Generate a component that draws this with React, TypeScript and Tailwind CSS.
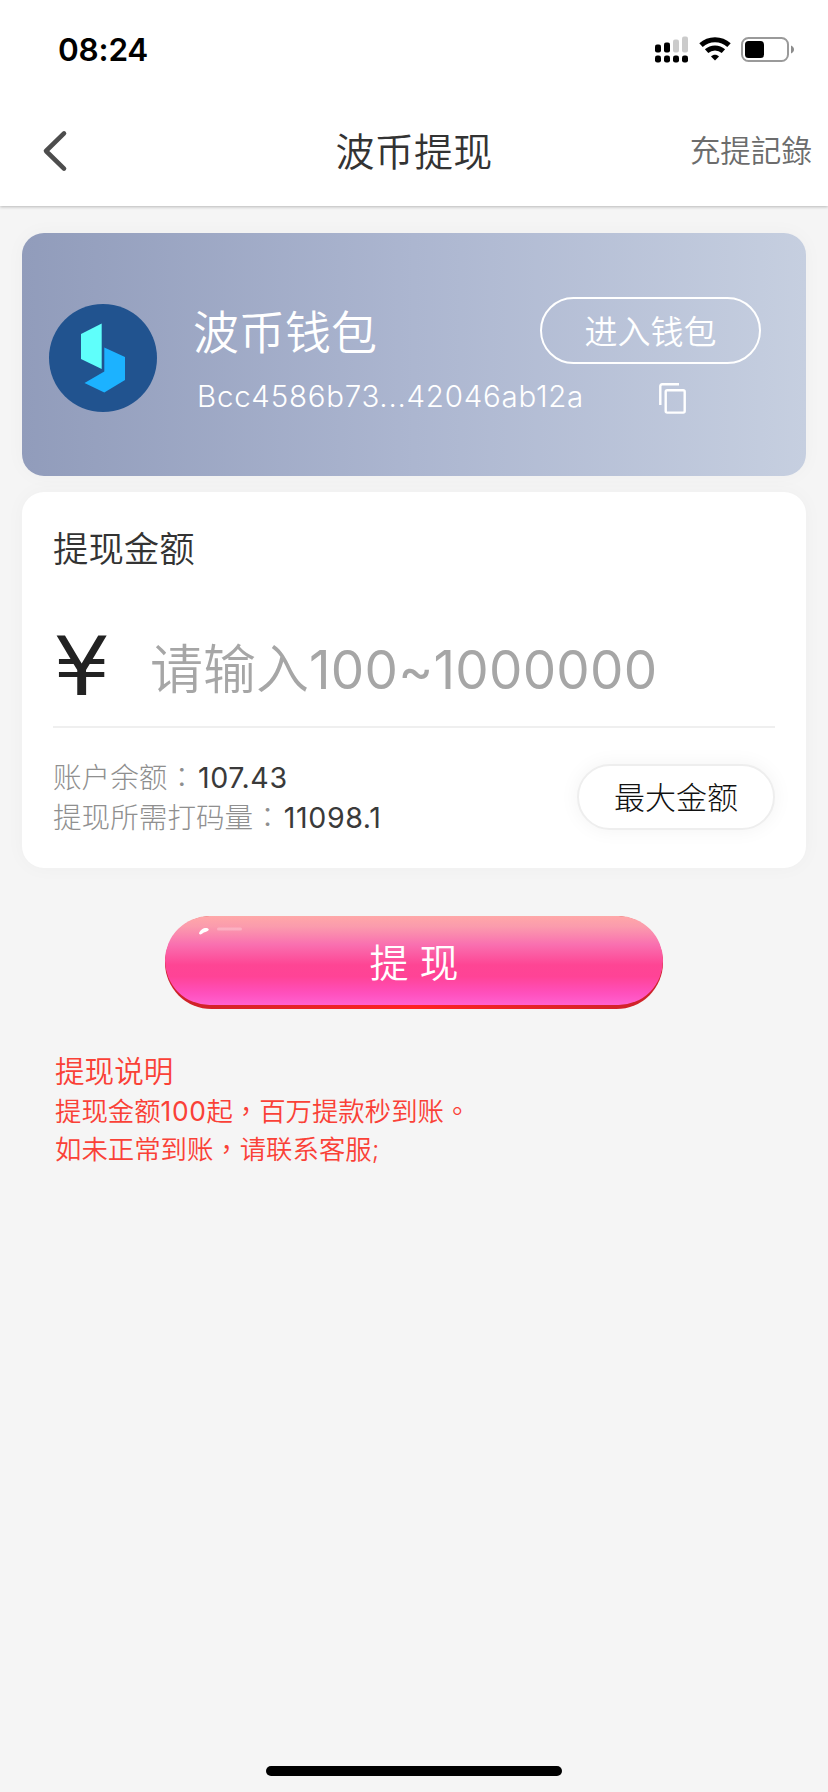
const sans = "font-['Inter','Noto_Sans_CJK_SC',sans-serif]";
const sansTc = "font-['Noto_Sans_CJK_TC',sans-serif]";

const balances = [
  { label: "账户余额", value: "107.43" },
  { label: "提现所需打码量", value: "11098.1" },
];

function StatusBar() {
  return (
    <div className="flex h-24 items-center justify-between pl-[58px] pr-[34px] pt-[3px] text-black">
      <span className="text-[31.5px] font-semibold leading-none tracking-[-0.2px]">08:24</span>
      <div className="flex items-center gap-[11px]">
        <svg className="h-[27px] w-[33px]" viewBox="0 0 33 27">
          <rect x="0" y="8.5" width="6" height="8" rx="2" />
          <rect x="9" y="6.5" width="6" height="10" rx="2" />
          <rect x="18" y="3.5" width="6" height="13" rx="2" fill="#cbcbcb" />
          <rect x="27" y="0.5" width="6" height="16" rx="2" fill="#cbcbcb" />
          {[0, 9, 18, 27].map((x) => (
            <rect key={x} x={x} y="19.5" width="6" height="7" rx="2.2" />
          ))}
        </svg>
        <svg className="mb-[1px] h-6 w-8" viewBox="0 0 32 24" fill="none" stroke="#000">
          <path d="M2 8.2C9.8 0.9 22.2 0.9 30 8.2" strokeWidth="5" />
          <path d="M7.6 14.2C12.3 9.9 19.7 9.9 24.4 14.2" strokeWidth="5" />
          <path d="M12 19.4C14.2 17.3 17.8 17.3 20 19.4L16 23.6Z" fill="#000" stroke="none" />
        </svg>
        <svg className="-ml-[1px] h-[25px] w-[53px]" viewBox="0 0 53 25">
          <rect x="1" y="1" width="46" height="23" rx="6.5" fill="none" stroke="#9a9a9a" strokeWidth="2" />
          <rect x="4" y="4" width="19" height="17" rx="3.5" />
          <path d="M50 8.5C54 10 54 15 50 16.5Z" fill="#8c8c8c" />
        </svg>
      </div>
    </div>
  );
}

function NavBar() {
  return (
    <div className="grid h-[110px] grid-cols-[1fr_auto_1fr] items-center px-4">
      <svg className="ml-[26px] h-[42px] w-[26px]" viewBox="0 0 26 42" fill="none" stroke="#4d4d4d" strokeWidth="4.6" strokeLinecap="round" strokeLinejoin="round">
        <path d="M22 3.4L4 21L22 38.6" />
      </svg>
      <h1 className="text-[39px] font-[350] leading-none tracking-[0.2px] text-[#333]">波币提现</h1>
      <span className={`${sansTc} mb-1 justify-self-end text-[30.6px] font-[350] leading-none text-[#6c6c6c]`}>充提記錄</span>
    </div>
  );
}

function WalletLogo() {
  return (
    <svg className="h-[108px] w-[108px] shrink-0" viewBox="0 0 108 108">
      <circle cx="54" cy="54" r="54" fill="#21538f" />
      <path d="M32 30L52.7 19.5V65L32 55Z" fill="#5ffffb" />
      <path d="M55.3 43.5L76 53V76L55.3 88.5L35.5 79L55.3 67.5Z" fill="#1cb2ff" />
    </svg>
  );
}

function WalletCard() {
  return (
    <section className="flex h-[243px] rounded-[22px] bg-linear-to-r from-[#919cbb] via-[#acb6d0] to-[#c6cfe0] pl-[27px] text-white shadow-[0_0_20px_rgba(0,0,0,0.03)]">
      <div className="pt-[71px]">
        <WalletLogo />
      </div>
      <div className="flex-1 pl-9 pr-[45px] pt-16">
        <div className="flex h-[67px] justify-between">
          <h2 className="pt-[2px] text-[46px] font-[350] leading-[67px]">波币钱包</h2>
          <button className="h-[67px] w-[221px] rounded-full border-2 border-white pt-[3px] text-[33px] font-[350] leading-none">进入钱包</button>
        </div>
        <div className="mt-3.5 flex h-10 items-center pl-1">
          <span className="w-[462px] pb-1 text-[29.5px] font-light leading-9 tracking-[0.74px]">Bcc4586b73...42046ab12a</span>
          <svg className="h-[31px] w-[27px]" viewBox="0 0 27 31" fill="none" stroke="#fff" strokeWidth="2.4">
            <path d="M1.3 22V3.3Q1.3 1.3 3.3 1.3H20" />
            <rect x="6.7" y="7.2" width="19" height="22.4" rx="1.5" />
          </svg>
        </div>
      </div>
    </section>
  );
}

function AmountCard() {
  return (
    <section className="mt-4 h-[376px] rounded-[22px] bg-white px-[31px] pt-[37px] shadow-[0_0_20px_rgba(0,0,0,0.03)]">
      <h3 className="h-[42px] text-[35.4px] font-[350] leading-[42px] text-[#333]">提现金额</h3>
      <div className="mt-[43px] flex h-[114px] items-start border-b-2 border-[#efefef]">
        <span className="w-[97px] origin-left scale-x-110 pt-2 font-['DejaVu_Sans',sans-serif] text-[82px] leading-[90px] text-[#222]">¥</span>
        <span className="pt-4 text-[53px] font-[350] leading-[80px] text-[#a6a6a6]">
          请输入<span className="font-normal tracking-[0.25px]">100~1000000</span>
        </span>
      </div>
      <div className="flex items-start justify-between pt-[28px]">
        <div className="text-[28.6px] font-light leading-[39px] text-[#8f8f8f]">
          {balances.map((b) => (
            <p key={b.label} className="h-10">
              {b.label}
              <span className={sansTc}>：</span>
              <span className="ml-[2px] font-normal tracking-[0.6px] text-[#3a3a3a]">{b.value}</span>
            </p>
          ))}
        </div>
        <button className="mt-2 h-[66px] w-[198px] rounded-full border-2 border-[#eee] bg-white text-[31px] font-light leading-none text-[#111] shadow-[0_0_20px_rgba(0,0,0,0.05)]">
          最大金额
        </button>
      </div>
    </section>
  );
}

function SubmitButton() {
  return (
    <button className="relative mx-auto mt-[48px] block h-[93px] w-[498px] rounded-full bg-linear-to-r from-[#cb2229] via-[#ff2222] to-[#cb2229] pb-1">
      <span className="flex h-[89px] items-center justify-center rounded-full bg-[linear-gradient(to_bottom,#ffa8a8_0%,#fb9bad_12%,#f970b0_32%,#fe4594_55%,#ff4396_68%,#ff50bd_87%,#ff62d0_100%)] pt-[5px] text-[39px] font-[350] text-white">
        提 现
      </span>
      <svg className="absolute left-[33px] top-[11px] h-2 w-[46px]" viewBox="0 0 46 8">
        <path d="M1 6.5C2 2.5 6 0.5 9 1C12 2 11 4 7.5 5C5 5.5 3.5 7.5 2 7.5Z" fill="#fff" />
        <rect x="19" y="0.5" width="25" height="3" rx="1.5" fill="#fff" fillOpacity="0.25" />
      </svg>
    </button>
  );
}

function Notes() {
  return (
    <div className="pl-[33px] pt-[42px] font-[350] text-[#fa4137]">
      <h4 className="h-10 text-[29.6px] leading-10">提现说明</h4>
      <div className="text-[26.4px] leading-[37.5px]">
        <p className="h-[38px]">
          提现金额<span className="font-normal tracking-[0.6px]">100</span>起<span className={sansTc}>，</span>百万提款秒到账<span className={sansTc}>。</span>
        </p>
        <p className="h-[38px]">
          如未正常到账<span className={sansTc}>，</span>请联系客服;
        </p>
      </div>
    </div>
  );
}

export default function App() {
  return (
    <div className={`${sans} flex h-[1792px] w-[828px] flex-col overflow-hidden bg-[#f5f5f5]`}>
      <header className="relative z-10 h-[206px] bg-white shadow-[0_1px_3px_rgba(0,0,0,0.25)]">
        <StatusBar />
        <NavBar />
      </header>
      <main className="flex-1 px-[22px] pt-[27px]">
        <WalletCard />
        <AmountCard />
        <SubmitButton />
        <Notes />
      </main>
      <div className="mx-auto mb-4 h-[10px] w-[296px] rounded-full bg-black" />
    </div>
  );
}
